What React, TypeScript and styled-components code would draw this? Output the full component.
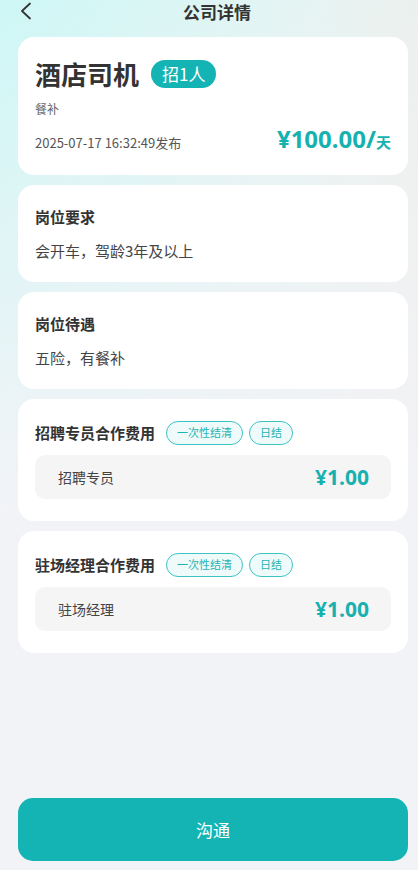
import React, { FC } from 'react'
import styled, { createGlobalStyle } from 'styled-components'

const GlobalStyle = createGlobalStyle`
  html, body {
    margin: 0;
    padding: 0;
  }
  body {
    font-family: "Noto Sans CJK SC", "Noto Sans", Roboto, sans-serif;
    background: #f2f3f7;
    color: #333;
  }
`

const Page = styled.div`
  min-height: 870px;
  display: flex;
  flex-direction: column;
  box-sizing: border-box;
  padding: 0 10px 9px 18px;
  background:
    linear-gradient(180deg, rgba(242, 243, 247, 0) 0px, #f2f3f7 520px),
    linear-gradient(100deg, #cdf7f6 0%, #e6f4f3 55%, #f4ebe6 100%);
`

const Header = styled.header`
  height: 24px;
  display: flex;
  align-items: center;
  justify-content: center;
  position: relative;
  margin-bottom: 13px;
`

const BackButton = styled.button`
  position: absolute;
  left: 0;
  top: 2px;
  width: 18px;
  height: 18px;
  border: 0;
  padding: 0;
  background: none;
  display: flex;
`

const Title = styled.h1`
  margin: 0 0 0 8px;
  font-size: 17px;
  font-weight: 700;
  color: #333;
  line-height: 22px;
`

const Cards = styled.div`
  display: flex;
  flex-direction: column;
  gap: 10px;
`

const Card = styled.section<{ $pad?: string }>`
  background: #fff;
  border-radius: 16px;
  padding: ${p => p.$pad || '21px 17px 20px'};
`

const JobRow = styled.div`
  display: flex;
  align-items: center;
  gap: 12px;
  height: 28px;
`

const JobName = styled.h2`
  margin: 0;
  font-size: 26px;
  font-weight: 700;
  color: #333;
  line-height: 28px;
`

const CountBadge = styled.span`
  background: #14b4b4;
  color: #fff;
  font-size: 17px;
  line-height: 28px;
  height: 28px;
  padding: 0 11px;
  border-radius: 14px;
`

const Perk = styled.div`
  margin-top: 12px;
  font-size: 12px;
  line-height: 17px;
  color: #666;
`

const MetaRow = styled.div`
  display: flex;
  align-items: baseline;
  justify-content: space-between;
  margin-top: 7px;
`

const Date = styled.span`
  font-size: 13px;
  color: #555;
`

const Price = styled.span`
  font-family: "Noto Sans", Roboto, sans-serif;
  font-size: 24px;
  font-weight: 700;
  color: #17b1b0;
  line-height: 30px;
`

const Unit = styled.span`
  font-family: "Noto Sans CJK SC", sans-serif;
  font-size: 15px;
`

const SectionTitle = styled.h3`
  margin: 0;
  font-size: 15px;
  font-weight: 700;
  color: #333;
  line-height: 22px;
`

const SectionText = styled.p`
  margin: 12px 0 0;
  font-size: 15px;
  line-height: 22px;
  color: #444;
`

const FeeHead = styled.div`
  display: flex;
  align-items: center;
  height: 24px;
  gap: 6px;
`

const FeeTitle = styled(SectionTitle)`
  margin-right: 5px;
`

const Tag = styled.span`
  height: 24px;
  box-sizing: border-box;
  border: 1.5px solid #3cc4c4;
  background: #effbfb;
  color: #1fb3b3;
  font-size: 11px;
  line-height: 21px;
  padding: 0 10px;
  border-radius: 12px;
`

const FeeBox = styled.div`
  margin-top: 10px;
  height: 44px;
  background: #f5f5f5;
  border-radius: 10px;
  display: flex;
  align-items: center;
  justify-content: space-between;
  padding: 0 22px 0 23px;
`

const FeeLabel = styled.span`
  font-size: 14px;
  color: #444;
`

const FeeAmount = styled.span`
  font-family: "Noto Sans", Roboto, sans-serif;
  font-size: 21px;
  font-weight: 700;
  color: #17b1b0;
`

const Spacer = styled.div`
  flex: 1;
`

const ChatButton = styled.button`
  height: 63px;
  border: 0;
  border-radius: 15px;
  background: #14b4b4;
  color: #fff;
  font-family: "Noto Sans CJK SC", sans-serif;
  font-size: 17px;
`

interface IFee {
  title: string
  role: string
  amount: string
}

const fees: IFee[] = [
  { title: '招聘专员合作费用', role: '招聘专员', amount: '¥1.00' },
  { title: '驻场经理合作费用', role: '驻场经理', amount: '¥1.00' },
]

const FeeCard: FC<IFee> = ({ title, role, amount }) => (
  <Card $pad="22px 17px 22px">
    <FeeHead>
      <FeeTitle>{title}</FeeTitle>
      <Tag>一次性结清</Tag>
      <Tag>日结</Tag>
    </FeeHead>
    <FeeBox>
      <FeeLabel>{role}</FeeLabel>
      <FeeAmount>{amount}</FeeAmount>
    </FeeBox>
  </Card>
)

const App: FC = () => (
  <>
    <GlobalStyle />
    <Page>
      <Header>
        <BackButton aria-label="返回">
          <svg width="18" height="18" viewBox="0 0 18 18" fill="none">
            <path d="M12 1.5 L4 9 L12 16.5" stroke="#333" strokeWidth="1.8" strokeLinecap="round" strokeLinejoin="round" />
          </svg>
        </BackButton>
        <Title>公司详情</Title>
      </Header>

      <Cards>
        <Card $pad="23px 17px 18px">
          <JobRow>
            <JobName>酒店司机</JobName>
            <CountBadge>招1人</CountBadge>
          </JobRow>
          <Perk>餐补</Perk>
          <MetaRow>
            <Date>2025-07-17 16:32:49发布</Date>
            <Price>
              ¥100.00/<Unit>天</Unit>
            </Price>
          </MetaRow>
        </Card>

        <Card>
          <SectionTitle>岗位要求</SectionTitle>
          <SectionText>会开车，驾龄3年及以上</SectionText>
        </Card>

        <Card>
          <SectionTitle>岗位待遇</SectionTitle>
          <SectionText>五险，有餐补</SectionText>
        </Card>

        {fees.map(f => (
          <FeeCard key={f.title} {...f} />
        ))}
      </Cards>

      <Spacer />
      <ChatButton>沟通</ChatButton>
    </Page>
  </>
)

export default App
